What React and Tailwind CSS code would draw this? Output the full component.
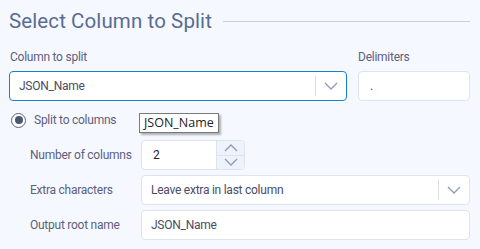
import React from "react";

const Chevron = ({ up = false, className = "" }) => (
  <svg width="14" height="8" viewBox="0 0 14 8" className={className}>
    <path
      d={up ? "M1 7 L7 1 L13 7" : "M1 1 L7 7 L13 1"}
      fill="none"
      stroke="#8e9ab8"
      strokeWidth="1.3"
    />
  </svg>
);

export default function App() {
  return (
    <div
      className="w-[480px] h-[249px] bg-[#f5f9ff] text-[#5d5f7d] overflow-hidden tracking-[-0.25px]"
      style={{ fontFamily: "Roboto, 'Noto Sans', sans-serif" }}
    >
      <div className="flex items-center pl-[9px] pr-[10px] pt-[7px]">
        <div className="text-[20.5px] leading-[28px] text-[#5a6b92] tracking-[0.1px]">
          Select Column to Split
        </div>
        <div className="flex-1 h-px bg-[#c9ced7] ml-[11px] mt-[1px]" />
      </div>

      <div className="flex pl-[9px] pr-[10px] mt-[15px] gap-[11px]">
        <div className="w-[338px] flex flex-col">
          <div className="text-[12px] leading-[14px] pl-[1px]">Column to split</div>
          <div className="mt-[7px] h-[30px] flex items-center bg-white border border-[#1a7fcf] rounded-[4px]">
            <div className="flex-1 pl-[9px] text-[12px] text-[#4a4c66]">JSON_Name</div>
            <div className="w-px h-[20px] bg-[#d7dce6]" />
            <div className="w-[30px] flex justify-center">
              <Chevron />
            </div>
          </div>
        </div>
        <div className="flex-1 flex flex-col">
          <div className="text-[12px] leading-[14px]">Delimiters</div>
          <div className="mt-[7px] h-[30px] flex items-center bg-white border border-[#dde3ef] rounded-[4px] pl-[11px] text-[12px] text-[#4a4c66]">
            .
          </div>
        </div>
      </div>

      <div className="relative flex items-center pl-[11px] mt-[10px] h-[18px]">
        <div className="w-[15px] h-[15px] rounded-full border-[1.5px] border-[#5b6479] flex items-center justify-center bg-white">
          <div className="w-[8px] h-[8px] rounded-full bg-[#4d5670]" />
        </div>
        <div className="ml-[8px] text-[12px]">Split to columns</div>
        <div
          className="absolute left-[139px] top-[2px] h-[20px] px-[4px] bg-white border border-[#7a7a7a] text-[12.5px] leading-[18px] text-[#222] tracking-normal shadow-[2px_2px_2px_rgba(0,0,0,0.3)] z-10"
          style={{ fontFamily: "'Open Sans', 'Noto Sans', sans-serif" }}
        >
          JSON_Name
        </div>
      </div>

      <div className="flex flex-col pl-[30px] pr-[10px] mt-[11px] gap-[5px]">
        <div className="flex items-center">
          <div className="w-[111px] text-[12px]">Number of columns</div>
          <div className="flex h-[30px] w-[104px] rounded-[4px] border border-[#dde3ef] bg-white overflow-hidden">
            <div className="flex-1 flex items-center pl-[11px] text-[12px] text-[#222]">2</div>
            <div className="w-[28px] bg-[#eef2fa] flex flex-col border-l border-[#dde3ef]">
              <div className="flex-1 flex items-center justify-center border-b border-[#dde3ef]">
                <Chevron up />
              </div>
              <div className="flex-1 flex items-center justify-center">
                <Chevron />
              </div>
            </div>
          </div>
        </div>

        <div className="flex items-center">
          <div className="w-[111px] text-[12px]">Extra characters</div>
          <div className="flex-1 h-[30px] flex items-center bg-white border border-[#dde3ef] rounded-[4px]">
            <div className="flex-1 pl-[9px] text-[12px] text-[#4a4c66]">Leave extra in last column</div>
            <div className="w-px h-[20px] bg-[#d7dce6]" />
            <div className="w-[30px] flex justify-center">
              <Chevron />
            </div>
          </div>
        </div>

        <div className="flex items-center">
          <div className="w-[111px] text-[12px]">Output root name</div>
          <div className="flex-1 h-[30px] flex items-center bg-white border border-[#dde3ef] rounded-[4px] pl-[9px] text-[12px] text-[#4a4c66]">
            JSON_Name
          </div>
        </div>
      </div>
    </div>
  );
}
